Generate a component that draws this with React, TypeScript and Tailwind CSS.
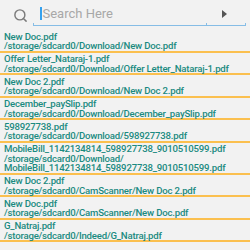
import { Search } from "lucide-react";

const files = [
  { name: "New Doc.pdf", path: ["/storage/sdcard0/Download/New Doc.pdf"] },
  { name: "Offer Letter_Nataraj-1.pdf", path: ["/storage/sdcard0/Download/Offer Letter_Nataraj-1.pdf"] },
  { name: "New Doc 2.pdf", path: ["/storage/sdcard0/Download/New Doc 2.pdf"] },
  { name: "December_paySlip.pdf", path: ["/storage/sdcard0/Download/December_paySlip.pdf"] },
  { name: "598927738.pdf", path: ["/storage/sdcard0/Download/598927738.pdf"] },
  {
    name: "MobileBill_1142134814_598927738_9010510599.pdf",
    path: ["/storage/sdcard0/Download/", "MobileBill_1142134814_598927738_9010510599.pdf"],
  },
  { name: "New Doc 2.pdf", path: ["/storage/sdcard0/CamScanner/New Doc 2.pdf"] },
  { name: "New Doc.pdf", path: ["/storage/sdcard0/CamScanner/New Doc.pdf"] },
  { name: "G_Natraj.pdf", path: ["/storage/sdcard0/Indeed/G_Natraj.pdf"] },
];

export default function App() {
  return (
    <div className="w-[250px] h-[250px] overflow-hidden bg-[#f2f2f2] font-['Roboto',sans-serif]">
      {/* Search bar */}
      <div className="h-[30px] flex items-start">
        <div className="w-[33px] pt-[8px] pl-[13px]">
          <Search size={15} strokeWidth={2.3} className="text-[#7a7a7a]" />
        </div>
        <div className="relative flex-1 mr-[4px] h-[27px] flex items-center">
          <span className="ml-[7px] w-[1.5px] h-[13px] bg-[#33a0ee]" />
          <span className="ml-px text-[13px] text-[#a8a8a8]">Search Here</span>
          <span className="ml-auto mr-[19px] w-0 h-0 border-y-[4px] border-y-transparent border-l-[5px] border-l-[#555]" />
          <div className="absolute left-0 right-0 bottom-[1px] h-px bg-[#86bde6]" />
          <div className="absolute left-0 bottom-[1px] w-px h-[3px] bg-[#86bde6]" />
          <div className="absolute left-[173px] bottom-[1px] w-px h-[3px] bg-[#86bde6]" />
          <div className="absolute right-0 bottom-[1px] w-px h-[3px] bg-[#86bde6]" />
        </div>
      </div>

      {/* File list */}
      <div className="flex flex-col">
        {files.map((f, i) => (
          <div key={i} className="pl-[4px] pt-[1.5px] pr-[3px] border-b-2 border-[#fbc04f] text-[9.6px] leading-[9.5px] tracking-[-0.2px] font-medium text-[#1a8a80]">
            <div className="whitespace-nowrap">{f.name}</div>
            {f.path.map((p, j) => (
              <div key={j} className="whitespace-nowrap">{p}</div>
            ))}
          </div>
        ))}
      </div>
    </div>
  );
}
